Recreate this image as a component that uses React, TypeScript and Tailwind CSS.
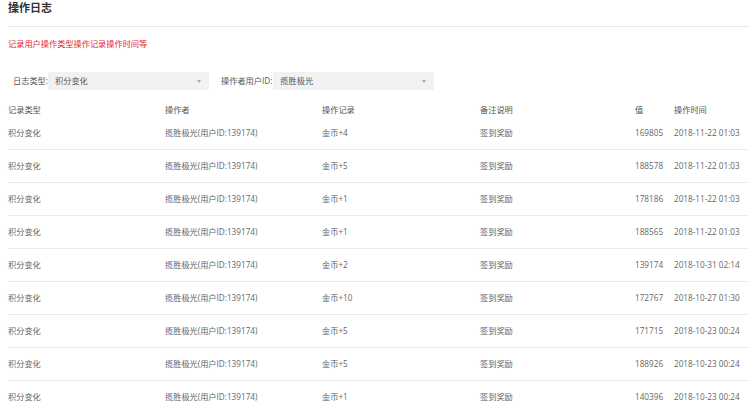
const rows = [
  { record: '金币+4', value: '169805', time: '2018-11-22 01:03' },
  { record: '金币+5', value: '188578', time: '2018-11-22 01:03' },
  { record: '金币+1', value: '178186', time: '2018-11-22 01:03' },
  { record: '金币+1', value: '188565', time: '2018-11-22 01:03' },
  { record: '金币+2', value: '139174', time: '2018-10-31 02:14' },
  { record: '金币+10', value: '172767', time: '2018-10-27 01:30' },
  { record: '金币+5', value: '171715', time: '2018-10-23 00:24' },
  { record: '金币+5', value: '188926', time: '2018-10-23 00:24' },
  { record: '金币+1', value: '140396', time: '2018-10-23 00:24' },
];

const cols = 'grid grid-cols-[157px_157px_158px_155px_39px_1fr] items-center whitespace-nowrap';

function Select({ value }: { value: string }) {
  return (
    <div className="flex h-[18px] w-[161px] shrink-0 items-center justify-between bg-[#f2f2f2] pr-[8px] pl-[7px]">
      <span className="text-[#555]">{value}</span>
      <span className="h-0 w-0 border-x-[2.5px] border-t-[3px] border-x-transparent border-t-[#aaa]" />
    </div>
  );
}

export default function App() {
  return (
    <div
      className="min-h-[412px] bg-white pl-2 text-[8.2px] text-[#666]"
      style={{ fontFamily: '"Open Sans", "Noto Sans CJK SC", sans-serif' }}
    >
      <div className="h-[27px] border-b border-[#e6e6e6]">
        <h1 className="text-[11px] leading-[16px] font-semibold text-[#333]">操作日志</h1>
      </div>

      <p className="mt-[11px] leading-[12px] text-[#e3262b]">记录用户操作类型操作记录操作时间等</p>

      <div className="mt-[22px] flex items-center pl-[5px] whitespace-nowrap">
        <span className="w-[35px] shrink-0 text-[#555]">日志类型:</span>
        <Select value="积分变化" />
        <span className="ml-[12px] shrink-0 pr-[1px] text-[#555]">操作者用户ID:</span>
        <Select value="揽胜极光" />
      </div>

      <div className={`${cols} mt-[13px] h-[14px] text-[#555]`}>
        <span>记录类型</span>
        <span>操作者</span>
        <span>操作记录</span>
        <span>备注说明</span>
        <span>值</span>
        <span>操作时间</span>
      </div>

      {rows.map((r, i) => (
        <div key={i} className={`${cols} h-[33px] border-b border-[#ececec]`}>
          <span>积分变化</span>
          <span>揽胜极光(用户ID:139174)</span>
          <span>{r.record}</span>
          <span>签到奖励</span>
          <span>{r.value}</span>
          <span>{r.time}</span>
        </div>
      ))}
    </div>
  );
}
